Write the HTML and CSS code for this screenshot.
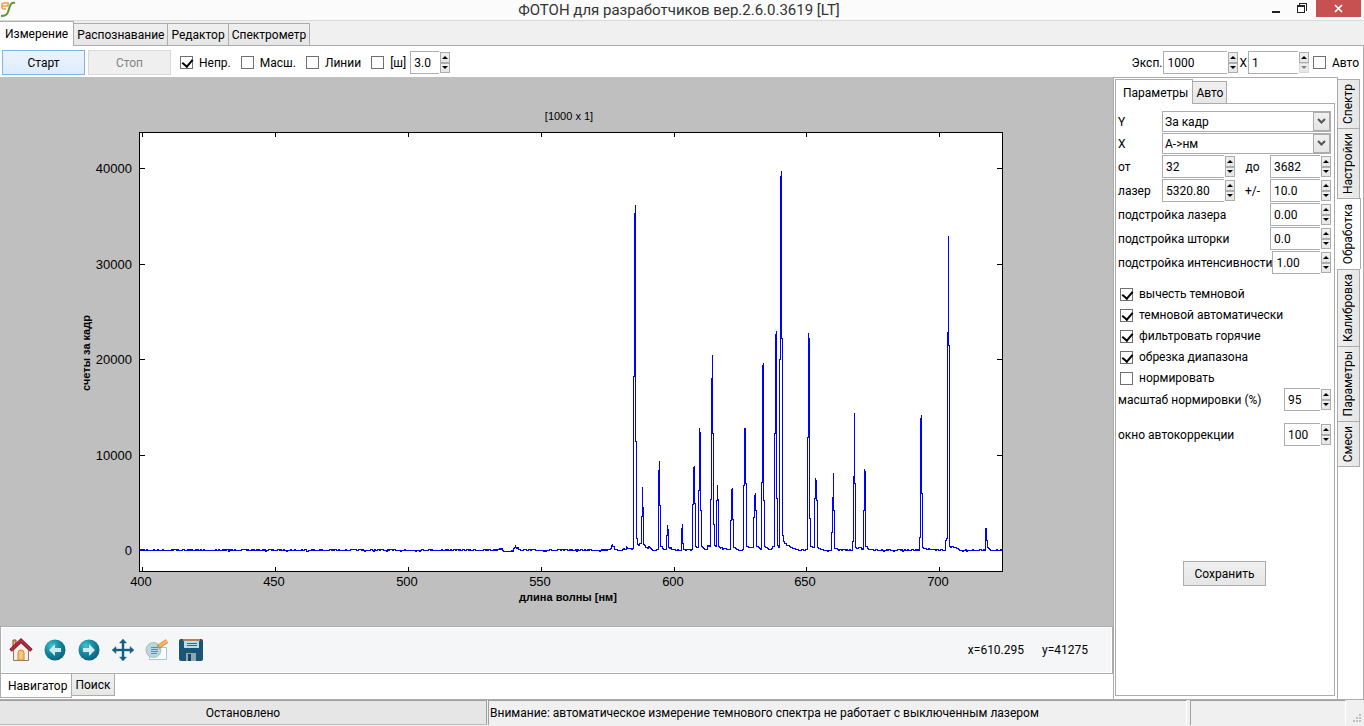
FILE: index.html
```html
<!DOCTYPE html>
<html lang="ru">
<head>
    <meta charset="UTF-8">
    <meta name="viewport" content="width=device-width, initial-scale=1.0">
    <link rel="stylesheet" href="styles.css">
    <title>ФОТОН для разработчиков вер.2.6.0.3619 [LT]</title>
</head>
<body>
    <div class="titlebar">
        <svg class="app-icon" width="16" height="18" viewBox="0 0 16 18" fill="none" stroke-width="1.6">
            <path d="M9 3H4Q2 3 2 5V7Q2 9 4 9H6M2 6H8V3" stroke="#f2a04a"/>
            <path d="M15 3Q11 2 10 6L8 12Q7 16 1 16" stroke="#5f9636" stroke-width="2"/>
        </svg>
        <div class="window-title">ФОТОН для разработчиков вер.2.6.0.3619 [LT]</div>
        <div class="window-buttons">
            <button class="win-btn" aria-label="Свернуть">
                <svg width="10" height="12" viewBox="0 0 10 12"><path d="M0 8H8V10H0Z" fill="#222"/></svg>
            </button>
            <button class="win-btn" aria-label="Восстановить">
                <svg width="12" height="12" viewBox="0 0 12 12" fill="none" stroke="#222" shape-rendering="crispEdges">
                    <path d="M2.5 1.500V.5H9.500V7.500H8.500M.5 2.500H7.500V9.500H.5ZM.5 3.500H7.500"/>
                </svg>
            </button>
            <button class="win-btn close" aria-label="Закрыть">
                <svg width="9" height="9" viewBox="0 0 9 9"><path d="M1 1L8 8M8 1L1 8" stroke="#fff" stroke-width="1.7"/></svg>
            </button>
        </div>
    </div>

    <div class="main-tabs">
        <button class="tab active">Измерение</button>
        <button class="tab">Распознавание</button>
        <button class="tab">Редактор</button>
        <button class="tab">Спектрометр</button>
    </div>

    <div class="window">
        <div class="toolbar">
            <button class="btn primary">Старт</button>
            <button class="btn" disabled>Стоп</button>
            <div class="options">
                <label class="check"><input type="checkbox" checked>Непр.</label>
                <label class="check"><input type="checkbox">Масш.</label>
                <label class="check"><input type="checkbox">Линии</label>
                <label class="check"><input type="checkbox">[ш]</label>
            </div>
            <div class="spin spin-tiny"><input type="text" value="3.0" aria-label="Ширина"><div class="arrows"><button class="up" aria-label="Больше"></button><button class="down" aria-label="Меньше"></button></div></div>
            <div class="exposure">
                <label for="exp">Эксп.</label>
                <div class="spin spin-exp"><input type="text" id="exp" value="1000"><div class="arrows"><button class="up" aria-label="Больше"></button><button class="down" aria-label="Меньше"></button></div></div>
                <label for="count">X</label>
                <div class="spin spin-count"><input type="text" id="count" value="1"><div class="arrows"><button class="up" aria-label="Больше"></button><button class="down" aria-label="Меньше" disabled></button></div></div>
                <label class="check"><input type="checkbox">Авто</label>
            </div>
        </div>

        <div class="content">
            <div class="left">
                <svg class="chart" viewBox="0 77 1113 549" role="img" aria-label="Спектр">
                    <rect class="plot" x="139.5" y="132.5" width="863" height="439"/>
                    <g id="ticks"></g>
                    <path id="spectrum"/>
                    <text class="small" x="569" y="120" text-anchor="middle">[1000 x 1]</text>
                    <text class="axis" x="568" y="601" text-anchor="middle">длина волны [нм]</text>
                    <text class="axis" transform="translate(90 353) rotate(-90)" text-anchor="middle">счеты за кадр</text>
                </svg>

                <div class="navbar">
                    <button class="tool" aria-label="Домой">
                        <svg width="24" height="24" viewBox="0 0 24 24">
                            <path d="M4 2H7V9H4Z" fill="#e8b070" stroke="#8c4a2c"/>
                            <path d="M4.500 12L12 5L19.500 12V22.500H4.500Z" fill="#f4efe8" stroke="#99755c"/>
                            <path d="M9 22V15Q9 12 12 12Q15 12 15 15V22Z" fill="#f5c878" stroke="#c68a3a"/>
                            <path d="M1.500 12.500L12 2.500L22.500 12.500" fill="none" stroke="#7d1830" stroke-width="3.500"/>
                            <path d="M2 12L12 2.500L22 12" fill="none" stroke="#bc2944" stroke-width="2"/>
                        </svg>
                    </button>
                    <button class="tool" aria-label="Назад">
                        <svg width="24" height="24" viewBox="0 0 24 24">
                            <circle cx="12" cy="12" r="10.500" fill="url(#ball)"/>
                            <path d="M6 12L12 6V10H18V14H12V18Z" fill="#cdeaf0"/>
                        </svg>
                    </button>
                    <button class="tool" aria-label="Вперёд">
                        <svg width="24" height="24" viewBox="0 0 24 24">
                            <defs>
                                <radialGradient id="ball" cx=".35" cy=".3" r=".75">
                                    <stop offset="0" stop-color="#3cc4cf"/>
                                    <stop offset=".5" stop-color="#16899e"/>
                                    <stop offset="1" stop-color="#0c5e7e"/>
                                </radialGradient>
                            </defs>
                            <circle cx="12" cy="12" r="10.500" fill="url(#ball)"/>
                            <path d="M18 12L12 6V10H6V14H12V18Z" fill="#cdeaf0"/>
                        </svg>
                    </button>
                    <button class="tool" aria-label="Сдвиг">
                        <svg width="24" height="24" viewBox="0 0 24 24" fill="#15607f">
                            <path d="M12 1L15.500 5H13V11H19V8.500L23 12L19 15.500V13H13V19H15.500L12 23L8.500 19H11V13H5V15.500L1 12L5 8.500V11H11V5H8.500Z" stroke="#15607f" stroke-width=".4"/>
                        </svg>
                    </button>
                    <button class="tool" aria-label="Масштаб">
                        <svg width="24" height="24" viewBox="0 0 24 24">
                            <path d="M4.500 9.500H21.500V21.500H4.500Z" fill="#fff" stroke="#8fd0dc"/>
                            <circle cx="8.500" cy="12" r="7.500" fill="#b4d9e1" stroke="#a2bfc7"/>
                            <path d="M13 9L22 3" stroke="#c98230" stroke-width="4.500"/>
                            <path d="M14 8L22 3" stroke="#f5b868" stroke-width="3"/>
                            <path d="M6 9.500H13M6 11.500H13M6 13.500H13M6 15.500H12" stroke="#4f95a5"/>
                        </svg>
                    </button>
                    <button class="tool" aria-label="Сохранить рисунок">
                        <svg width="24" height="24" viewBox="0 0 24 24">
                            <rect x="0" y="1" width="24" height="22" rx="2" fill="#1b5474"/>
                            <path d="M4 1H21V3H4Z" fill="#b98058"/>
                            <path d="M5 3H20V10H5Z" fill="#b9dce5"/>
                            <path d="M8 5.500H18M8 7.500H18" stroke="#376c83"/>
                            <path d="M7 15H17V23H7Z" fill="#8ba9b5"/>
                            <path d="M9 16H12V23H9Z" fill="#174562"/>
                        </svg>
                    </button>
                    <div class="coords"><span>x=610.295</span><span>y=41275</span></div>
                </div>

                <div class="bottom-tabs">
                    <button class="tab active">Навигатор</button>
                    <button class="tab">Поиск</button>
                </div>
            </div>

            <div class="side">
                <div class="side-tabs">
                    <button class="tab active">Параметры</button>
                    <button class="tab">Авто</button>
                </div>
                <div class="panel">
                    <div class="row combo-row">
                        <label for="modeY">Y</label>
                        <div class="combo">
                            <select id="modeY"><option>За кадр</option></select>
                            <span class="combo-arrow"><svg width="9" height="7" viewBox="0 0 9 7"><path d="M1 1L4.500 4.500L8 1" fill="none" stroke="#555" stroke-width="2"/></svg></span>
                        </div>
                    </div>
                    <div class="row combo-row">
                        <label for="modeX">X</label>
                        <div class="combo">
                            <select id="modeX"><option>A-&gt;нм</option></select>
                            <span class="combo-arrow"><svg width="9" height="7" viewBox="0 0 9 7"><path d="M1 1L4.500 4.500L8 1" fill="none" stroke="#555" stroke-width="2"/></svg></span>
                        </div>
                    </div>
                    <div class="row pair-row">
                        <label for="from">от</label>
                        <div class="spin"><input type="text" id="from" value="32"><div class="arrows"><button class="up" aria-label="Больше"></button><button class="down" aria-label="Меньше"></button></div></div>
                        <label class="mid" for="to">до</label>
                        <div class="spin"><input type="text" id="to" value="3682"><div class="arrows"><button class="up" aria-label="Больше"></button><button class="down" aria-label="Меньше"></button></div></div>
                    </div>
                    <div class="row pair-row">
                        <label for="laser">лазер</label>
                        <div class="spin"><input type="text" id="laser" value="5320.80"><div class="arrows"><button class="up" aria-label="Больше"></button><button class="down" aria-label="Меньше"></button></div></div>
                        <label class="mid" for="delta">+/-</label>
                        <div class="spin"><input type="text" id="delta" value="10.0"><div class="arrows"><button class="up" aria-label="Больше"></button><button class="down" aria-label="Меньше"></button></div></div>
                    </div>
                    <div class="row">
                        <label for="adjLaser">подстройка лазера</label>
                        <div class="spin spin-mid"><input type="text" id="adjLaser" value="0.00"><div class="arrows"><button class="up" aria-label="Больше"></button><button class="down" aria-label="Меньше"></button></div></div>
                    </div>
                    <div class="row">
                        <label for="adjShutter">подстройка шторки</label>
                        <div class="spin spin-mid"><input type="text" id="adjShutter" value="0.0"><div class="arrows"><button class="up" aria-label="Больше"></button><button class="down" aria-label="Меньше"></button></div></div>
                    </div>
                    <div class="row">
                        <label for="adjInt">подстройка интенсивности</label>
                        <div class="spin spin-mid"><input type="text" id="adjInt" value="1.00"><div class="arrows"><button class="up" aria-label="Больше"></button><button class="down" aria-label="Меньше"></button></div></div>
                    </div>

                    <div class="checks">
                        <label class="check"><input type="checkbox" checked>вычесть темновой</label>
                        <label class="check"><input type="checkbox" checked>темновой автоматически</label>
                        <label class="check"><input type="checkbox" checked>фильтровать горячие</label>
                        <label class="check"><input type="checkbox" checked>обрезка диапазона</label>
                        <label class="check"><input type="checkbox">нормировать</label>
                    </div>

                    <div class="row">
                        <label for="scale">масштаб нормировки (%)</label>
                        <div class="spin spin-small"><input type="text" id="scale" value="95"><div class="arrows"><button class="up" aria-label="Больше"></button><button class="down" aria-label="Меньше"></button></div></div>
                    </div>
                    <div class="row row-last">
                        <label for="autowin">окно автокоррекции</label>
                        <div class="spin spin-small"><input type="text" id="autowin" value="100"><div class="arrows"><button class="up" aria-label="Больше"></button><button class="down" aria-label="Меньше"></button></div></div>
                    </div>

                    <button class="btn save">Сохранить</button>
                </div>
            </div>

            <div class="vtabs">
                <button class="vtab"><span>Спектр</span></button>
                <button class="vtab"><span>Настройки</span></button>
                <button class="vtab active"><span>Обработка</span></button>
                <button class="vtab"><span>Калибровка</span></button>
                <button class="vtab"><span>Параметры</span></button>
                <button class="vtab"><span>Смеси</span></button>
            </div>
        </div>
    </div>

    <div class="statusbar">
        <div class="status state">Остановлено</div>
        <div class="status message">Внимание: автоматическое измерение темнового спектра не работает с выключенным лазером</div>
        <div class="status extra"></div>
        <svg class="grip" width="18" height="26" viewBox="0 0 18 26" fill="#bfbfbf">
            <path d="M13 14h2v2h-2zM10 17h2v2h-2zM13 17h2v2h-2zM7 20h2v2h-2zM10 20h2v2h-2zM13 20h2v2h-2z"/>
        </svg>
    </div>

    <script>
        const xTicks = [[400, 142], [450, 275], [500, 408], [550, 541], [600, 674], [650, 806], [700, 939]];
        const yTicks = [[40000, 168], [30000, 264], [20000, 359], [10000, 455], [0, 550]];

        // corner points of the spectrum, 550 is zero
        const steps = [
            [496, 549], [497, 548], [500, 548], [503, 550], [513, 548], [514, 547], [515, 544], [516, 547], [519, 549],
            [607, 548], [610, 547], [611, 544], [612, 543], [613, 546], [615, 549], [622, 548], [626, 545], [627, 547], [631, 548],
            [633, 376], [634, 213], [635, 204], [636, 441], [637, 538], [638, 544], [639, 542], [640, 543], [641, 516],
            [642, 486], [643, 507], [644, 544], [646, 547], [648, 545], [650, 547], [652, 549],
            [658, 470], [659, 460], [660, 505], [661, 546], [663, 548], [666, 535], [667, 524], [668, 529],
            [669, 547], [672, 549], [681, 528], [682, 523], [683, 543], [684, 549],
            [692, 504], [693, 467], [694, 465], [695, 503], [696, 546], [698, 490], [699, 427], [700, 432],
            [701, 510], [702, 546], [704, 548], [707, 545], [709, 545], [710, 499], [711, 378], [712, 354], [713, 433],
            [714, 524], [715, 545], [716, 500], [717, 484], [718, 499], [719, 546], [721, 547], [724, 548],
            [730, 520], [731, 489], [732, 487], [733, 519], [734, 547], [737, 549],
            [743, 485], [744, 427], [745, 428], [746, 483], [747, 546], [753, 517], [754, 495], [755, 492], [756, 510],
            [757, 546], [760, 548], [761, 482], [762, 365], [763, 362], [764, 500], [765, 546], [768, 548],
            [772, 545], [774, 433], [775, 334], [776, 330], [777, 498], [778, 545], [779, 359], [780, 176], [781, 170],
            [782, 338], [783, 535], [784, 541], [786, 543], [788, 545], [790, 546], [793, 548], [797, 549],
            [807, 437], [808, 332], [809, 338], [810, 518], [811, 546], [814, 498], [815, 477], [816, 480],
            [817, 500], [818, 547], [820, 548], [823, 549], [831, 532], [832, 497], [833, 472], [834, 510], [835, 548],
            [838, 549], [852, 541], [853, 476], [854, 412], [855, 483], [856, 547], [862, 548], [863, 510], [864, 468],
            [865, 471], [866, 546], [868, 548], [871, 549], [919, 537], [920, 418], [921, 414], [922, 493], [923, 547],
            [926, 548], [932, 549], [945, 540], [946, 538], [947, 332], [948, 235], [949, 345], [950, 546],
            [953, 546], [956, 547], [959, 549], [985, 528], [986, 527], [987, 540], [988, 547], [990, 549],
            [1002, 549]
        ];

        // small repeatable noise of the dark signal
        let seed = 7;
        function noise() {
            seed = (seed * 16807) % 2147483647;
            const r = seed / 2147483647;
            return r < 0.35 ? 0 : r > 0.96 ? 2 : 1;
        }

        // rising edges step before the climb, falling edges drop first
        let d = 'M140.5 550.5';
        let x = 140, level = 549;
        steps.forEach(([sx, sy]) => {
            for (; x < sx; x++) {
                if (level >= 544) {
                    d += `H${x + 0.5}V${level + noise() + 0.5}`;
                }
            }
            d += sy < level ? `H${sx + 0.5}V${sy + 0.5}` : `V${sy + 0.5}H${sx + 0.5}`;
            level = sy;
        });
        document.getElementById('spectrum').setAttribute('d', d);

        let ticks = '';
        xTicks.forEach(([label, px]) => {
            ticks += `<path d="M${px + 0.5} 132v5M${px + 0.5} 571v-4"/>`;
            ticks += `<text x="${px - 1}" y="586" text-anchor="middle">${label}</text>`;
        });
        yTicks.forEach(([label, py]) => {
            ticks += `<path d="M140 ${py + 0.5}h5M1002 ${py + 0.5}h-5"/>`;
            ticks += `<text x="132" y="${py + 5}" text-anchor="end">${label}</text>`;
        });
        document.getElementById('ticks').innerHTML = ticks;
    </script>
</body>
</html>
```

FILE: styles.css
```css
* {
    box-sizing: border-box;
}

body {
    margin: 0;
    height: 100vh;
    display: flex;
    flex-direction: column;
    overflow: hidden;
    background-color: #f0f0f0;
    color: #000;
    font-family: Roboto, "Open Sans", sans-serif;
    font-size: 12px;
    line-height: 16px;
}

button, input, select {
    font: inherit;
    color: inherit;
    margin: 0;
    padding: 0;
    border-radius: 0;
}

/* title */
.titlebar {
    display: flex;
    align-items: flex-start;
    height: 21px;
    flex: none;
    background-color: #fbfbfb;
    border-bottom: 1px solid #d9d9d9;
}

.window-title {
    flex: 1;
    padding-left: 78px;
    text-align: center;
    font-size: 15px;
    line-height: 20px;
    color: #333;
}

.window-buttons {
    display: flex;
    padding-right: 3px;
}

.win-btn {
    display: flex;
    align-items: center;
    justify-content: center;
    width: 26px;
    height: 17px;
    border: none;
    background: none;
}

.win-btn.close {
    width: 45px;
    background-color: #c75050;
}

/* tabs */
.tab {
    height: 22px;
    padding: 0 3px;
    border: 1px solid #acacac;
    border-left: none;
    background: linear-gradient(#f0f0f0, #e6e6e6);
    white-space: nowrap;
}

.tab.active {
    background: #fff;
}

.main-tabs {
    display: flex;
    align-items: flex-end;
    height: 24px;
    flex: none;
}

.main-tabs .tab {
    border-bottom: none;
}

.main-tabs .tab.active {
    height: 25px;
    padding: 0 5px;
    margin-bottom: -1px;
    position: relative;
}

.window {
    flex: 1;
    min-height: 0;
    display: flex;
    flex-direction: column;
    background-color: #fff;
    border-top: 1px solid #acacac;
    border-right: 1px solid #acacac;
}

/* toolbar */
.toolbar {
    display: flex;
    align-items: center;
    height: 31px;
    flex: none;
    padding: 2px 4px 0 2px;
    gap: 3px;
}

.btn {
    width: 83px;
    height: 25px;
    border: 1px solid #acacac;
    background: linear-gradient(#f0f0f0, #e5e5e5);
}

.btn.primary {
    border-color: #7eb4ea;
    background: linear-gradient(#ecf4fc, #dcecfc);
}

.btn:disabled {
    color: #838383;
    border-color: #d9d9d9;
    background: #efefef;
}

.options {
    display: flex;
    gap: 10px;
    padding: 0 1px 0 6px;
}

.check {
    display: flex;
    align-items: center;
    gap: 6px;
    white-space: nowrap;
}

.check input {
    appearance: none;
    position: relative;
    width: 13px;
    height: 13px;
    border: 1px solid #707070;
    background-color: #fff;
}

.check input:checked::after {
    content: "";
    position: absolute;
    left: 3px;
    top: 0;
    width: 5px;
    height: 8px;
    border: solid #000;
    border-width: 0 2px 2px 0;
    transform: rotate(40deg);
}

.exposure {
    display: flex;
    align-items: center;
    gap: 1px;
    margin-left: auto;
}

.exposure .check {
    padding-left: 3px;
}

/* number boxes */
.spin {
    display: flex;
    height: 23px;
    min-width: 0;
}

.spin input {
    flex: 1;
    min-width: 0;
    padding-left: 3px;
    border: 1px solid #abadb3;
    border-right: none;
    background-color: #fff;
}

.arrows {
    display: flex;
    flex-direction: column;
    width: 11px;
    padding: 1px 0 1px 1px;
}

.arrows button {
    display: flex;
    align-items: center;
    justify-content: center;
    flex: 1;
    border: 1px solid #acacac;
    background: linear-gradient(#f0f0f0, #e5e5e5);
}

.arrows button::before {
    content: "";
    border: 3px solid transparent;
    border-top-width: 0;
    border-bottom-color: #000;
}

.arrows .down::before {
    border-top: 3px solid #000;
    border-bottom: 0;
}

.arrows button:disabled {
    border-color: #d9d9d9;
}

.arrows button:disabled::before {
    border-top-color: #838383;
}

.spin-tiny {
    width: 40px;
}

.spin-exp {
    width: 75px;
}

.spin-count {
    width: 61px;
}

.spin-mid {
    width: 61px;
}

.spin-small {
    width: 47px;
}

/* work area */
.content {
    flex: 1;
    min-height: 0;
    display: flex;
}

.left {
    flex: 1;
    min-width: 0;
    display: flex;
    flex-direction: column;
}

.chart {
    flex: 1;
    min-height: 0;
    width: 100%;
    background-color: #bfbfbf;
    font-family: "Liberation Sans", Arial, sans-serif;
    font-size: 13px;
}

.plot {
    fill: #fff;
    stroke: #000;
    shape-rendering: crispEdges;
}

#ticks path {
    stroke: #000;
    shape-rendering: crispEdges;
}

#spectrum {
    fill: none;
    stroke: #0000ff;
    shape-rendering: crispEdges;
}

.small {
    font-size: 11px;
}

.axis {
    font-size: 11px;
    font-weight: bold;
}

.navbar {
    display: flex;
    align-items: center;
    gap: 10px;
    height: 48px;
    flex: none;
    padding: 0 24px 0 8px;
    border: 1px solid #acacac;
    box-shadow: inset 0 0 0 1px #fff;
    background-color: #f4f6f8;
}

.tool {
    width: 24px;
    height: 24px;
    border: none;
    background: none;
}

.tool svg {
    display: block;
}

.coords {
    display: flex;
    gap: 18px;
    margin-left: auto;
}

.bottom-tabs {
    display: flex;
    height: 25px;
    flex: none;
}

.bottom-tabs .tab {
    border-top: none;
}

.bottom-tabs .tab.active {
    height: 24px;
    padding: 0 4px 0 7px;
    border-left: 1px solid #acacac;
}

/* parameters */
.side {
    display: flex;
    flex-direction: column;
    width: 225px;
    flex: none;
    padding: 1px 2px 3px 1px;
    border: solid #acacac;
    border-width: 1px 1px 0;
}

.side-tabs {
    display: flex;
    align-items: flex-end;
    height: 24px;
}

.side-tabs .tab {
    padding-top: 1px;
    border-bottom: none;
}

.side-tabs .tab.active {
    position: relative;
    height: 25px;
    padding: 2px 4px 0 7px;
    margin-bottom: -1px;
    border-left: 1px solid #acacac;
}

.panel {
    flex: 1;
    padding: 7px 3px 0 2px;
    border: 1px solid #acacac;
}

.row {
    display: flex;
    align-items: center;
    justify-content: space-between;
    margin-bottom: 1px;
    white-space: nowrap;
}

.row label {
    flex: none;
}

.combo {
    position: relative;
    width: 169px;
    height: 21px;
}

.combo select {
    appearance: none;
    width: 100%;
    height: 100%;
    padding-left: 2px;
    border: 1px solid #abadb3;
    background-color: #fff;
}

.combo-arrow {
    position: absolute;
    top: 1px;
    right: 1px;
    bottom: 1px;
    width: 17px;
    display: flex;
    align-items: center;
    justify-content: center;
    border: 1px solid #acacac;
    background: linear-gradient(#f0f0f0, #e5e5e5);
    pointer-events: none;
}

.pair-row {
    display: grid;
    grid-template-columns: 44px 73px 35px 61px;
}

.pair-row .mid {
    text-align: center;
}

.checks {
    display: flex;
    flex-direction: column;
    gap: 5px;
    padding: 11px 0 0 2px;
    margin-bottom: 2px;
}

.row-last {
    margin-top: 12px;
}

.btn.save {
    display: block;
    margin: 115px auto 0;
}

/* tabs along the right edge */
.vtabs {
    display: flex;
    flex-direction: column;
    align-items: flex-start;
    width: 25px;
    flex: none;
    padding-top: 2px;
}

.vtab {
    width: 22px;
    padding: 4px 0;
    border: 1px solid #acacac;
    border-left: none;
    border-bottom: none;
    background: linear-gradient(90deg, #f0f0f0, #e6e6e6);
}

.vtab:last-child {
    border-bottom: 1px solid #acacac;
}

.vtab span {
    display: block;
    margin: 0 auto;
    writing-mode: vertical-rl;
    transform: rotate(180deg);
    line-height: 19px;
}

.vtab.active {
    width: 24px;
    margin-left: -1px;
    padding: 5px 0;
    position: relative;
    background: #fff;
}

/* status line */
.statusbar {
    display: flex;
    height: 27px;
    flex: none;
    padding-bottom: 1px;
    border-top: 1px solid #acacac;
    line-height: 24px;
}

.status {
    border-top: 1px solid #a0a0a0;
    border-right: 1px solid #fff;
    white-space: nowrap;
}

.state {
    width: 487px;
    flex: none;
    border-right-color: #a0a0a0;
    border-bottom: 1px solid #bcbcbc;
    background-color: #e6e6e6;
    text-align: center;
}

.message {
    flex: 1;
    min-width: 0;
    overflow: hidden;
    margin: 0 3px 0 1px;
    padding-left: 1px;
    border-left: 1px solid #a0a0a0;
}

.extra {
    width: 156px;
    flex: none;
    border-left: 1px solid #a0a0a0;
}

.grip {
    flex: none;
}
```
